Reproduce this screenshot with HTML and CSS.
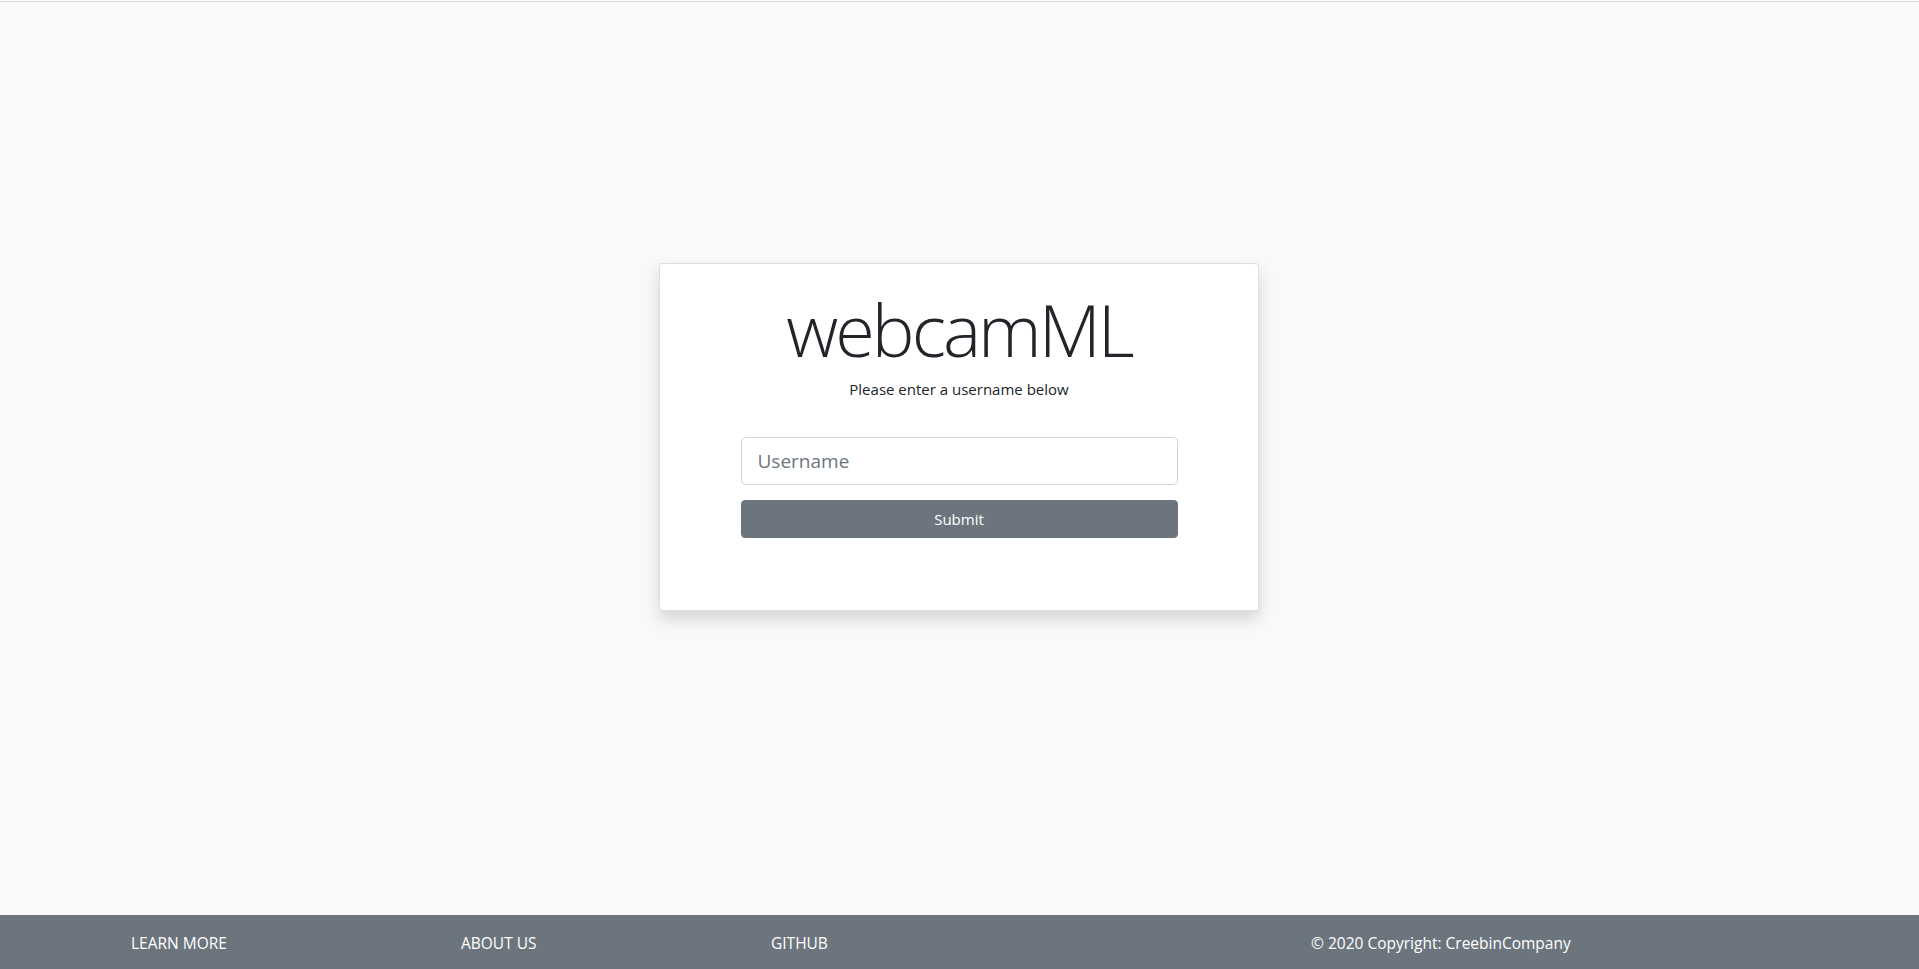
FILE: index.html
```html
<!DOCTYPE html>
<html lang="en">
<head>
<meta charset="utf-8">
<title>webcamML</title>
<link rel="stylesheet" href="styles.css">
</head>
<body>
<div class="topline"></div>
<main class="main">
  <section class="card">
    <h1 class="title">webcamML</h1>
    <p class="subtitle">Please enter a username below</p>
    <form class="login-form">
      <input class="input" type="text" placeholder="Username">
      <button class="btn" type="button">Submit</button>
    </form>
  </section>
</main>
<footer class="footer">
  <a class="footer-link" href="#">LEARN MORE</a>
  <a class="footer-link" href="#">ABOUT US</a>
  <a class="footer-link" href="#">GITHUB</a>
  <span class="copyright">© 2020 Copyright: CreebinCompany</span>
</footer>
</body>
</html>
```

FILE: styles.css
```css
* { box-sizing: border-box; }
html, body { margin: 0; padding: 0; }
body {
  min-height: 100vh;
  display: flex;
  flex-direction: column;
  background: #f9f9f9;
  font-family: "Open Sans", "Noto Sans", sans-serif;
  font-size: 16px;
  line-height: 1.5;
  color: #212529;
}
.topline {
  height: 2px;
  border-bottom: 1px solid #dcdcdc;
}
.main {
  flex: 1;
  display: flex;
  flex-direction: column;
  align-items: center;
  padding-top: 261px;
}
.card {
  width: 600px;
  margin-left: -1px;
  background: #fff;
  border: 1px solid rgba(0,0,0,.125);
  border-radius: 4px;
  box-shadow: 0 8px 16px rgba(0,0,0,.15);
  padding: 22px 0 72px;
  display: flex;
  flex-direction: column;
  align-items: center;
}
.title {
  margin: 0;
  font-size: 72px;
  font-weight: 300;
  line-height: 1.2;
  letter-spacing: -3px;
  color: #212529;
}
.subtitle {
  margin: 5px 0 0;
  font-size: 15px;
  line-height: 24px;
}
.login-form {
  width: 437px;
  margin-top: 36px;
  display: flex;
  flex-direction: column;
  gap: 15px;
}
.input {
  height: 48px;
  padding: 8px 16px;
  font-family: inherit;
  font-size: 19px;
  color: #495057;
  border: 1px solid #ced4da;
  border-radius: 4.8px;
  background: #fff;
  outline: none;
}
.input::placeholder { color: #6c757d; }
.btn {
  height: 38px;
  font-family: inherit;
  font-size: 15px;
  color: #fff;
  background: #6c757d;
  border: 1px solid #6c757d;
  border-radius: 4px;
}
.footer {
  height: 54px;
  background: #6c757d;
  display: grid;
  grid-template-columns: 330px 310px 540px auto;
  align-items: center;
  padding: 4px 0 0 131px;
  color: #fff;
}
.footer-link, .copyright {
  color: #fff;
  text-decoration: none;
  font-size: 15.5px;
  justify-self: start;
}
```
